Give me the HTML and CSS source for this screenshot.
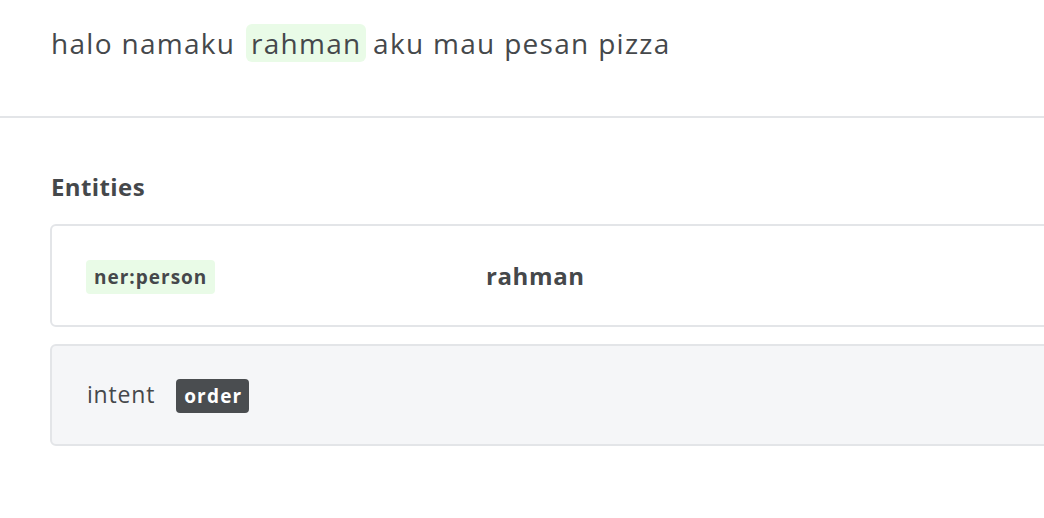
FILE: index.html
```html
<!DOCTYPE html>
<html>
<head>
<meta charset="utf-8">
<link rel="stylesheet" href="styles.css">
</head>
<body>
<div class="page">
  <div class="sentence-wrap">
    <p class="sentence">halo namaku <span class="hl">rahman</span> aku mau pesan pizza</p>
  </div>
  <div class="divider"></div>
  <div class="section">
    <h2 class="title">Entities</h2>
    <div class="card">
      <div class="col-tag"><span class="tag">ner:person</span></div>
      <div class="value">rahman</div>
    </div>
    <div class="card grey">
      <span class="intent-label">intent</span>
      <span class="badge">order</span>
    </div>
  </div>
</div>
</body>
</html>
```

FILE: styles.css
```css
html, body {
  margin: 0;
  padding: 0;
  background: #ffffff;
  overflow: hidden;
}
.page {
  width: 1044px;
  height: 518px;
  overflow: hidden;
  font-family: "Open Sans", Lato, sans-serif;
  color: #45484b;
}
.sentence-wrap {
  height: 116px;
  padding-left: 51px;
  box-sizing: border-box;
  padding-top: 24px;
}
.sentence {
  margin: 0;
  font-size: 28px;
  font-weight: 500;
  letter-spacing: 1.3px;
  line-height: 38px;
  white-space: nowrap;
}
.hl {
  display: inline-block;
  background: #e9fbe7;
  border-radius: 6px;
  padding: 0 4px 0 5px;
  margin: 0 -1px 0 2px;
}
.divider {
  height: 2px;
  background: #e3e5e8;
  width: 100%;
}
.section {
  padding-left: 50px;
  padding-top: 54px;
}
.title {
  margin: 0 0 22px 1px;
  font-size: 24px;
  letter-spacing: 0.4px;
  font-weight: 700;
  line-height: 30px;
}
.card {
  width: 1100px;
  box-sizing: border-box;
  border: 2px solid #e3e5e8;
  border-radius: 6px;
  background: #ffffff;
  height: 103px;
  display: flex;
  align-items: center;
  padding-left: 34px;
  margin-bottom: 17px;
}
.card.grey {
  background: #f5f6f8;
  height: 102px;
  padding-left: 35px;
}
.col-tag {
  width: 400px;
  display: flex;
  align-items: center;
  padding-top: 3px;
}
.tag {
  display: inline-block;
  background: #e9fbe7;
  border-radius: 4px;
  font-weight: 700;
  font-size: 19px;
  letter-spacing: 1px;
  line-height: 34px;
  padding: 0 8px 0 8px;
}
.value {
  font-size: 24px;
  letter-spacing: 0.6px;
  font-weight: 700;
  padding-bottom: 1px;
}
.intent-label {
  font-size: 23px;
  font-weight: 500;
  letter-spacing: 0.8px;
  margin-right: 21px;
  padding-bottom: 3px;
}
.badge {
  display: inline-block;
  background: #4a4d50;
  color: #ffffff;
  font-weight: 700;
  font-size: 19px;
  letter-spacing: 1.2px;
  line-height: 34px;
  padding: 0 7px 0 8px;
  border-radius: 4px;
  margin-top: 2px;
}
```
